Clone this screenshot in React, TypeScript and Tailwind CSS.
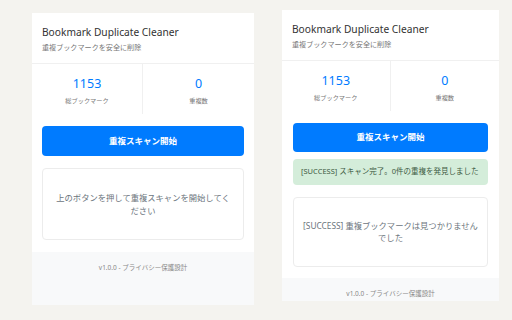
import React from "react";

const font = { fontFamily: '"Noto Sans", "Noto Sans CJK JP", sans-serif' };

function Header() {
  return (
    <div className="px-[10px] pt-[12px] pb-[10px] border-b border-[#f0f0f0]">
      <div className="text-[10.2px] leading-[15px] text-[#333]">Bookmark Duplicate Cleaner</div>
      <div className="mt-[1px] text-[7.1px] leading-[12px] text-[#777]">重複ブックマークを安全に削除</div>
    </div>
  );
}

function Stats() {
  return (
    <div className="grid grid-cols-2">
      <div className="flex flex-col items-center pt-[11px] pb-[8px] border-r border-[#f0f0f0]">
        <div className="text-[12.5px] leading-[18px] text-[#007bff]">1153</div>
        <div className="mt-[3px] text-[6.2px] leading-[10px] text-[#777]">総ブックマーク</div>
      </div>
      <div className="flex flex-col items-center pt-[11px] pb-[8px]">
        <div className="text-[12.5px] leading-[18px] text-[#007bff]">0</div>
        <div className="mt-[3px] text-[6.2px] leading-[10px] text-[#777]">重複数</div>
      </div>
    </div>
  );
}

function Footer() {
  return (
    <div className="flex-1 bg-[#f8f9fa] pt-[11px] text-center text-[6.5px] leading-[10px] text-[#888]">
      v1.0.0 - プライバシー保護設計
    </div>
  );
}

export default function App() {
  return (
    <div className="w-[512px] h-[320px] bg-[#f4f3ef] flex items-start pl-[32px] gap-[28px]" style={font}>
      <div className="mt-[13px] w-[222px] h-[292px] bg-white flex flex-col">
        <Header />
        <Stats />
        <div className="px-[10px] pt-[12px] pb-[12px]">
          <button className="w-full h-[30px] rounded-[4px] bg-[#007bff] text-white text-[8.5px] font-semibold">
            重複スキャン開始
          </button>
          <div className="mt-[12px] border border-[#ececec] rounded-[4px] px-[11px] py-[22px] text-center text-[8.3px] leading-[13px] text-[#6c757d]">
            上のボタンを押して重複スキャンを開始してください
          </div>
        </div>
        <Footer />
      </div>
      <div className="mt-[10px] w-[217px] h-[291px] bg-white flex flex-col">
        <Header />
        <Stats />
        <div className="px-[11px] pt-[11px] pb-[11px]">
          <button className="w-full h-[29px] rounded-[4px] bg-[#007bff] text-white text-[8.5px] font-semibold">
            重複スキャン開始
          </button>
          <div className="mt-[7px] h-[26px] rounded-[4px] bg-[#d4edda] px-[8px] flex items-center whitespace-nowrap text-[7.5px] text-[#3d5a43]">
            [SUCCESS] スキャン完了。0件の重複を発見しました
          </div>
          <div className="mt-[12px] border border-[#ececec] rounded-[4px] px-[9px] py-[22px] text-center text-[8.3px] leading-[12px] text-[#6c757d]">
            [SUCCESS] 重複ブックマークは見つかりませんでした
          </div>
        </div>
        <Footer />
      </div>
    </div>
  );
}
